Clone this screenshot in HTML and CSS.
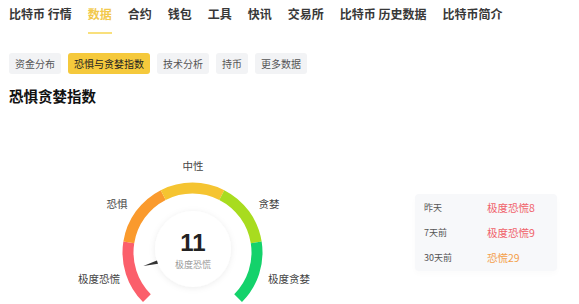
FILE: index.html
```html
<!DOCTYPE html>
<html lang="zh-CN">
<head>
  <meta charset="UTF-8" />
  <title>恐惧贪婪指数</title>
  <link rel="stylesheet" href="styles.css">
</head>
<body>
  <nav class="topnav">
    <a href="#">比特币 行情</a>
    <a href="#" class="active">数据</a>
    <a href="#">合约</a>
    <a href="#">钱包</a>
    <a href="#">工具</a>
    <a href="#">快讯</a>
    <a href="#">交易所</a>
    <a href="#">比特币 历史数据</a>
    <a href="#">比特币简介</a>
  </nav>

  <div class="tabs">
    <span class="tab">资金分布</span>
    <span class="tab active">恐惧与贪婪指数</span>
    <span class="tab">技术分析</span>
    <span class="tab">持币</span>
    <span class="tab">更多数据</span>
  </div>

  <h2 class="title">恐惧贪婪指数</h2>

  <div class="content">
    <svg class="gauge" width="400" height="198" viewBox="9 106 400 198">
      <defs>
        <filter id="soft" x="-30%" y="-30%" width="160%" height="160%">
          <feDropShadow dx="0" dy="1" stdDeviation="3" flood-color="#000" flood-opacity="0.08"/>
        </filter>
      </defs>
      <g fill="none" stroke-width="11">
        <path d="M146.89 298.11 A64.5 64.5 0 0 1 128.79 242.41" stroke="#fb5f6b"/>
        <path d="M128.79 242.41 A64.5 64.5 0 0 1 163.22 195.03" stroke="#fa9a2d"/>
        <path d="M163.22 195.03 A64.5 64.5 0 0 1 221.78 195.03" stroke="#f5c431"/>
        <path d="M221.78 195.03 A64.5 64.5 0 0 1 256.21 242.41" stroke="#a8dc1f"/>
        <path d="M256.21 242.41 A64.5 64.5 0 0 1 238.11 298.11" stroke="#14d26b"/>
      </g>
      <polygon points="143.3,265.96 194.08,258.29 190.92,246.71" fill="#333"/>
      <circle cx="193" cy="249" r="38" fill="#fff" filter="url(#soft)"/>

      <text class="g-label" x="193" y="170">中性</text>
      <text class="g-label" x="117" y="208">恐惧</text>
      <text class="g-label" x="269" y="208">贪婪</text>
      <text class="g-label" x="99" y="283">极度恐慌</text>
      <text class="g-label" x="289" y="283">极度贪婪</text>

      <text class="g-value" x="193" y="251">11</text>
      <text class="g-state" x="193" y="268">极度恐慌</text>
    </svg>

    <div class="history">
      <div class="row"><span class="when">昨天</span><span class="val fear-x">极度恐慌8</span></div>
      <div class="row"><span class="when">7天前</span><span class="val fear-x">极度恐慌9</span></div>
      <div class="row"><span class="when">30天前</span><span class="val fear">恐慌29</span></div>
    </div>
  </div>
</body>
</html>
```

FILE: styles.css
```css
* {
  margin: 0;
  padding: 0;
  box-sizing: border-box;
  font-family: "Noto Sans CJK SC", "Noto Sans", sans-serif;
}

body {
  background: #fff;
  padding: 0 9px;
  overflow: hidden;
}

.topnav {
  display: flex;
  gap: 16px;
  padding-top: 5px;
}

.topnav a {
  font-size: 12px;
  line-height: 17px;
  font-weight: bold;
  color: #383838;
  text-decoration: none;
  padding-bottom: 10px;
  border-bottom: 2px solid transparent;
  white-space: nowrap;
}

.topnav a.active {
  color: #f2c94c;
  border-bottom-color: #f9e07c;
}

.tabs {
  display: flex;
  gap: 7px;
  margin-top: 19px;
}

.tab {
  font-size: 10px;
  line-height: 21px;
  height: 21px;
  padding: 0 6px;
  border-radius: 3px;
  background: #f2f3f5;
  color: #555;
  white-space: nowrap;
}

.tab.active {
  background: #f5c93c;
  color: #222;
}

.title {
  margin-top: 12px;
  font-size: 14.5px;
  line-height: 20px;
  font-weight: bold;
  color: #111;
}

.content {
  display: flex;
  align-items: flex-start;
}

.gauge {
  display: block;
  flex: none;
}

.g-label {
  font-size: 10.5px;
  fill: #444;
  text-anchor: middle;
}

.g-value {
  font-family: "Liberation Sans", Arial, sans-serif;
  font-size: 24px;
  font-weight: bold;
  fill: #222;
  text-anchor: middle;
}

.g-state {
  font-size: 9px;
  fill: #999;
  text-anchor: middle;
}

.history {
  margin-left: 6px;
  margin-top: 88px;
  width: 142px;
  padding: 1px 0 1px 9px;
  background: #f7f8fa;
  border-radius: 4px;
  box-shadow: 0 3px 6px rgba(0, 0, 0, 0.02);
}

.row {
  display: grid;
  grid-template-columns: 63px auto;
  align-items: center;
  height: 25px;
}

.when {
  font-size: 9px;
  color: #555;
}

.val {
  font-size: 10.5px;
}

.fear-x {
  color: #f0626a;
}

.fear {
  color: #f4a04a;
}
```
